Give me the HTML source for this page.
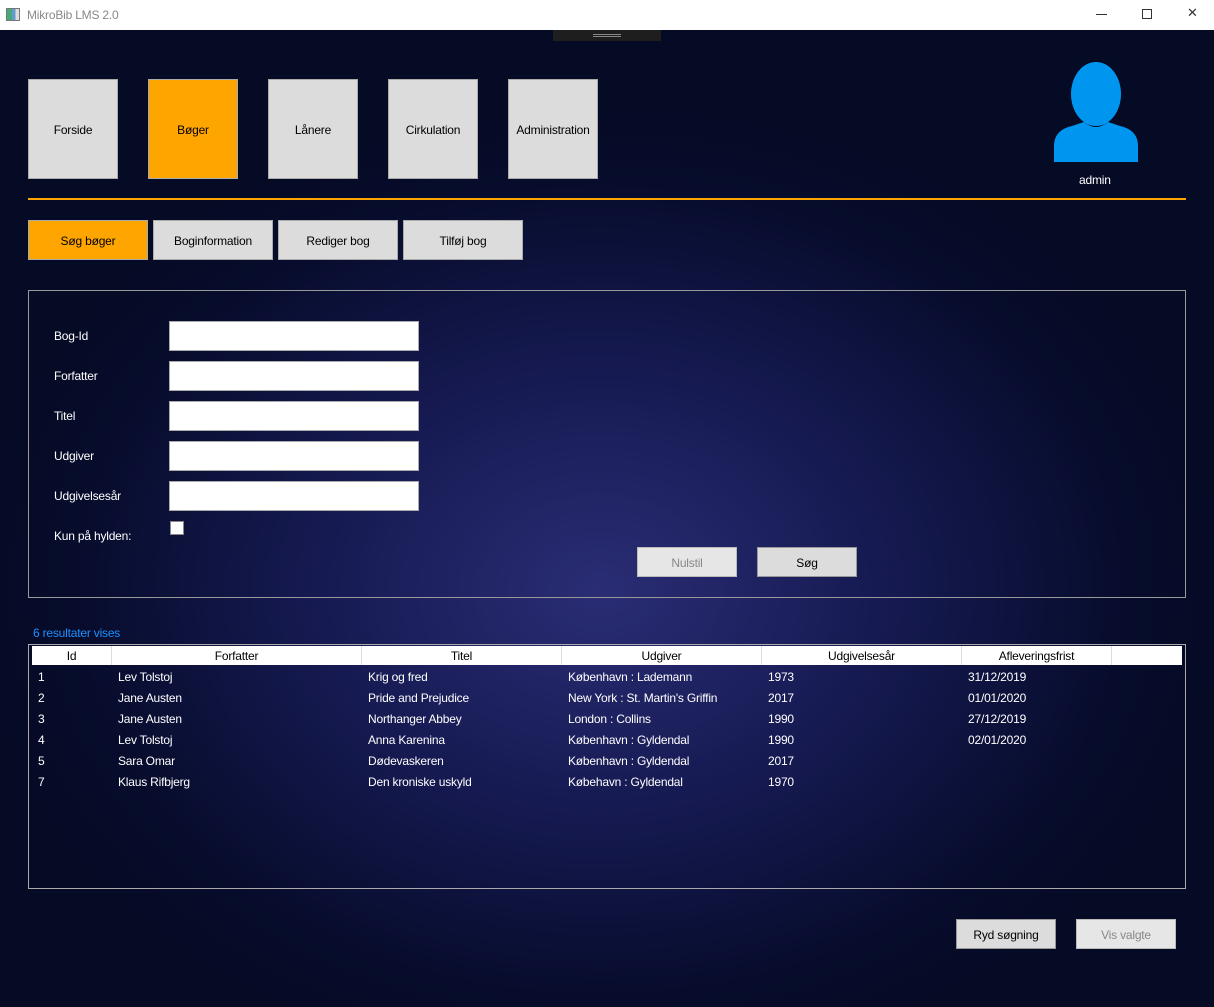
<!DOCTYPE html>
<html><head><meta charset="utf-8"><style>
*{margin:0;padding:0;box-sizing:border-box}
body{width:1214px;height:1007px;overflow:hidden;font-family:"Liberation Sans",sans-serif;font-size:12px;letter-spacing:-0.2px;position:relative;background:#050a25}
.abs{position:absolute}
#title{left:0;top:0;width:1214px;height:30px;background:#fff;color:#888;font-size:12px}
#main{left:0;top:30px;width:1214px;height:977px;background:radial-gradient(ellipse 620px 480px at 600px 560px,#2a2d74 0%,#161a52 45%,#070c2c 85%,#050a25 100%)}
.nav{top:79px;width:90px;height:100px;background:#dcdcdc;border:1px solid #aaa;display:flex;align-items:center;justify-content:center;color:#000;padding-top:2px}
.sub{top:220px;width:120px;height:40px;background:#dcdcdc;border:1px solid #aaa;display:flex;align-items:center;justify-content:center;padding-top:2px}
.lbl{left:54px;color:#fff;margin-top:1px}
.inp{left:169px;width:250px;height:30px;background:#fff;border:1px solid #aaa}
.btn{height:30px;width:100px;background:#dcdcdc;border:1px solid #999;display:flex;align-items:center;justify-content:center;padding-top:2px}
.hc{top:0;height:19px;border-right:1px solid #ddd;text-align:center;line-height:20px;color:#000}
.row{color:#fff;height:21px;line-height:22px}
</style></head><body>
<div id="title" class="abs">
 <div class="abs" style="left:6px;top:8px;width:14px;height:13px;border:1px solid #777;background:linear-gradient(90deg,#4a7 0 40%,#69c 40% 70%,#ddd 70%)"></div>
 <div class="abs" style="left:27px;top:8px">MikroBib LMS 2.0</div>
 <div class="abs" style="left:1096px;top:14px;width:11px;height:1px;background:#333"></div>
 <div class="abs" style="left:1142px;top:9px;width:10px;height:10px;border:1px solid #333"></div>
 <div class="abs" style="left:1187px;top:5px;font-size:13px;color:#333">✕</div>
</div>
<div id="main" class="abs"></div>
<div class="abs" style="left:553px;top:30px;width:108px;height:11px;background:#1e1e1e"><div class="abs" style="left:40px;top:4px;width:28px;height:3px;border-top:1px solid #888;border-bottom:1px solid #888"></div></div>

<div class="abs nav" style="left:28px">Forside</div>
<div class="abs nav" style="left:148px;background:#ffa500">Bøger</div>
<div class="abs nav" style="left:268px">Lånere</div>
<div class="abs nav" style="left:388px">Cirkulation</div>
<div class="abs nav" style="left:508px">Administration</div>

<svg class="abs" style="left:1050px;top:58px" width="92" height="104" viewBox="0 0 92 104">
 <ellipse cx="46" cy="36" rx="25" ry="32" fill="#0096f0"/>
 <path d="M4 104 L4 88 Q4 72 22 68 L34 64 Q46 74 58 64 L70 68 Q88 72 88 88 L88 104 Z" fill="#0096f0"/>
</svg>
<div class="abs" style="left:1079px;top:173px;color:#fff">admin</div>
<div class="abs" style="left:28px;top:198px;width:1158px;height:2px;background:#ffa500"></div>

<div class="abs sub" style="left:28px;background:#ffa500">Søg bøger</div>
<div class="abs sub" style="left:153px">Boginformation</div>
<div class="abs sub" style="left:278px">Rediger bog</div>
<div class="abs sub" style="left:403px">Tilføj bog</div>

<div class="abs" style="left:28px;top:290px;width:1158px;height:308px;border:1px solid #999"></div>
<div class="abs lbl" style="top:328px">Bog-Id</div>
<div class="abs lbl" style="top:368px">Forfatter</div>
<div class="abs lbl" style="top:408px">Titel</div>
<div class="abs lbl" style="top:448px">Udgiver</div>
<div class="abs lbl" style="top:488px">Udgivelsesår</div>
<div class="abs lbl" style="top:528px">Kun på hylden:</div>
<div class="abs inp" style="top:321px"></div>
<div class="abs inp" style="top:361px"></div>
<div class="abs inp" style="top:401px"></div>
<div class="abs inp" style="top:441px"></div>
<div class="abs inp" style="top:481px"></div>
<div class="abs" style="left:170px;top:521px;width:14px;height:14px;background:#fff;border:1px solid #888"></div>
<div class="abs btn" style="left:637px;top:547px;color:#888;background:#e6e6e6;border-color:#bbb">Nulstil</div>
<div class="abs btn" style="left:757px;top:547px">Søg</div>

<div class="abs" style="left:33px;top:626px;color:#1e90ff">6 resultater vises</div>
<div class="abs" style="left:28px;top:644px;width:1158px;height:245px;border:1px solid #aaa"></div>
<div class="abs" style="left:32px;top:646px;width:1150px;height:19px;background:#fff">
 <div class="abs hc" style="left:0;width:80px">Id</div>
 <div class="abs hc" style="left:80px;width:250px">Forfatter</div>
 <div class="abs hc" style="left:330px;width:200px">Titel</div>
 <div class="abs hc" style="left:530px;width:200px">Udgiver</div>
 <div class="abs hc" style="left:730px;width:200px">Udgivelsesår</div>
 <div class="abs hc" style="left:930px;width:150px">Afleveringsfrist</div>
</div>
<div class="abs" style="left:0;top:666px;width:1214px">
 <div class="row" style="position:relative"><span class="abs" style="left:38px">1</span><span class="abs" style="left:118px">Lev Tolstoj</span><span class="abs" style="left:368px">Krig og fred</span><span class="abs" style="left:568px">København : Lademann</span><span class="abs" style="left:768px">1973</span><span class="abs" style="left:968px">31/12/2019</span></div>
 <div class="row" style="position:relative"><span class="abs" style="left:38px">2</span><span class="abs" style="left:118px">Jane Austen</span><span class="abs" style="left:368px">Pride and Prejudice</span><span class="abs" style="left:568px">New York : St. Martin's Griffin</span><span class="abs" style="left:768px">2017</span><span class="abs" style="left:968px">01/01/2020</span></div>
 <div class="row" style="position:relative"><span class="abs" style="left:38px">3</span><span class="abs" style="left:118px">Jane Austen</span><span class="abs" style="left:368px">Northanger Abbey</span><span class="abs" style="left:568px">London : Collins</span><span class="abs" style="left:768px">1990</span><span class="abs" style="left:968px">27/12/2019</span></div>
 <div class="row" style="position:relative"><span class="abs" style="left:38px">4</span><span class="abs" style="left:118px">Lev Tolstoj</span><span class="abs" style="left:368px">Anna Karenina</span><span class="abs" style="left:568px">København : Gyldendal</span><span class="abs" style="left:768px">1990</span><span class="abs" style="left:968px">02/01/2020</span></div>
 <div class="row" style="position:relative"><span class="abs" style="left:38px">5</span><span class="abs" style="left:118px">Sara Omar</span><span class="abs" style="left:368px">Dødevaskeren</span><span class="abs" style="left:568px">København : Gyldendal</span><span class="abs" style="left:768px">2017</span></div>
 <div class="row" style="position:relative"><span class="abs" style="left:38px">7</span><span class="abs" style="left:118px">Klaus Rifbjerg</span><span class="abs" style="left:368px">Den kroniske uskyld</span><span class="abs" style="left:568px">Købehavn : Gyldendal</span><span class="abs" style="left:768px">1970</span></div>
</div>

<div class="abs btn" style="left:956px;top:919px">Ryd søgning</div>
<div class="abs btn" style="left:1076px;top:919px;color:#888;background:#e6e6e6;border-color:#bbb">Vis valgte</div>
</body></html>
